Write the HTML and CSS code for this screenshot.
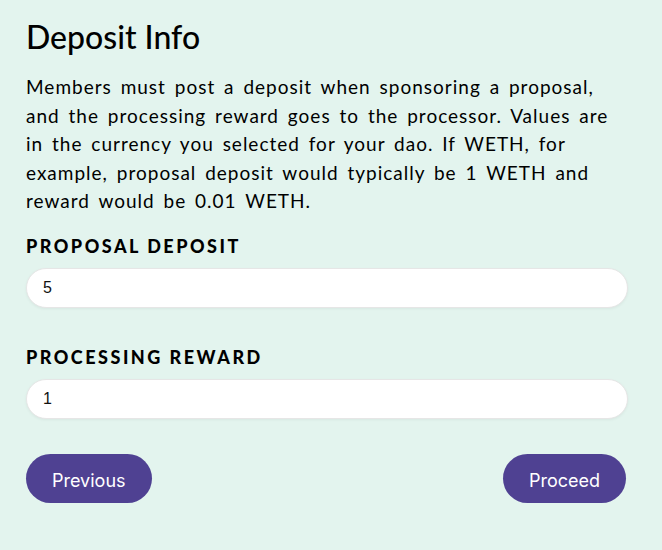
FILE: index.html
```html
<!DOCTYPE html>
<html lang="en">
<head>
    <meta charset="UTF-8">
    <meta name="viewport" content="width=device-width, initial-scale=1.0">
    <title>Deposit Info</title>
    <link rel="stylesheet" href="styles.css">
</head>
<body>

    <div class="step">
        <h2>Deposit Info</h2>

        <p class="intro">Members must post a deposit when sponsoring a proposal, and the processing reward goes to the processor. Values are in the currency you selected for your dao. If WETH, for example, proposal deposit would typically be 1 WETH and reward would be 0.01 WETH.</p>

        <div class="field">
            <label for="proposalDeposit">Proposal Deposit</label>
            <input type="text" id="proposalDeposit" value="5">
        </div>

        <div class="field">
            <label for="processingReward">Processing Reward</label>
            <input type="text" id="processingReward" value="1">
        </div>

        <div class="button-row">
            <button type="button">Previous</button>
            <button type="button">Proceed</button>
        </div>
    </div>

</body>
</html>
```

FILE: styles.css
```css
body {
    margin: 0;
    background: #e3f4ee;
    color: #000;
    font-family: Lato, "Open Sans", sans-serif;
}

.step {
    width: 602px;
    padding: 18px 0 20px 26px;
}

h2 {
    font-size: 32px;
    font-weight: 500;
    line-height: 38px;
    margin: 0 0 17px;
}

.intro {
    font-size: 19px;
    line-height: 28.5px;
    letter-spacing: 1px;
    word-spacing: 3px;
    margin: 0 0 19px;
}

.field {
    margin-bottom: 38px;
}

label {
    display: block;
    font-size: 18px;
    font-weight: 900;
    text-transform: uppercase;
    letter-spacing: 2.5px;
    margin-bottom: 11px;
}

input {
    display: block;
    box-sizing: border-box;
    width: 100%;
    height: 40px;
    padding: 0 16px;
    font-family: "Liberation Sans", Arial, sans-serif;
    font-size: 16px;
    color: #111;
    background: #fff;
    border: 1px solid #e6e6e6;
    border-radius: 20px;
    box-shadow: 0 1px 3px rgba(0, 0, 0, 0.05);
    outline: none;
}

.button-row {
    display: flex;
    justify-content: space-between;
    margin-top: -3px;
    padding-right: 2px;
}

button {
    height: 49px;
    padding: 4px 26px 0;
    font-family: Inter, Roboto, sans-serif;
    font-size: 18px;
    color: #fff;
    background-color: #4f4192;
    border: none;
    border-radius: 25px;
    cursor: pointer;
}
```
